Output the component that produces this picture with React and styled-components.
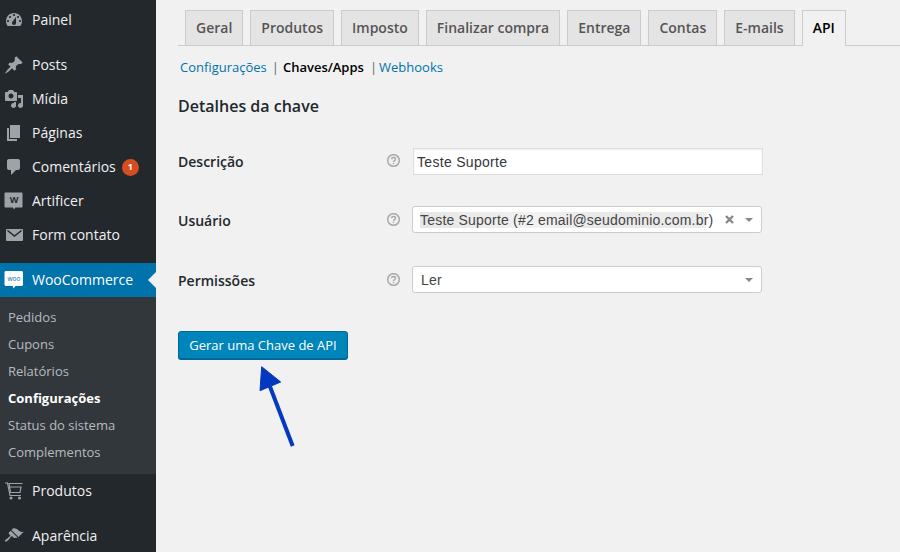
import React from 'react';
import styled, { createGlobalStyle } from 'styled-components';

const GlobalStyle = createGlobalStyle`
    html, body {
        margin: 0;
        padding: 0;
        background: #f1f1f1;
        overflow: hidden;
    }
    * {
        box-sizing: border-box;
    }
`;

const Page = styled.div`
    display: flex;
    width: 900px;
    height: 552px;
    overflow: hidden;
    background: #f1f1f1;
    font-family: "Open Sans", sans-serif;
    color: #23282d;
`;

const Sidebar = styled.nav`
    flex: 0 0 156px;
    height: 552px;
    overflow: hidden;
    padding-top: 3px;
    background: #23282d;
`;

const MenuItem = styled.div`
    position: relative;
    display: flex;
    align-items: center;
    gap: 8px;
    height: 34px;
    padding-left: 4px;
    margin-bottom: ${(p) => (p.$spaced ? '11px' : '0')};
    font-size: 14px;
    line-height: 18px;
    color: #f0f0f0;
    background: ${(p) => (p.$active ? '#0073aa' : 'transparent')};
    svg {
        flex: 0 0 20px;
        fill: ${(p) => (p.$active ? '#fff' : '#9ea3a8')};
    }
    ${(p) => p.$active && `
        color: #fff;
        &::after {
            content: "";
            position: absolute;
            right: 0;
            top: 9px;
            border: 8px solid transparent;
            border-right-color: #f1f1f1;
        }
    `}
`;

const Badge = styled.span`
    display: inline-flex;
    align-items: center;
    justify-content: center;
    width: 17px;
    height: 17px;
    margin-left: -2px;
    border-radius: 50%;
    background: #d54e21;
    color: #fff;
    font-size: 9px;
    font-weight: 700;
`;

const SubMenu = styled.div`
    padding: 7px 0 8px;
    background: #32373c;
`;

const SubItem = styled.div`
    height: 27px;
    padding-left: 8px;
    font-size: 13px;
    line-height: 27px;
    font-weight: ${(p) => (p.$current ? 700 : 400)};
    color: ${(p) => (p.$current ? '#fff' : 'rgba(240, 245, 250, 0.7)')};
`;

const Main = styled.main`
    position: relative;
    flex: 1;
    padding: 10px 0 0 22px;
`;

const Tabs = styled.div`
    display: flex;
    gap: 7px;
    height: 36px;
    padding-left: 7px;
    border-bottom: 1px solid #ccc;
`;

const Tab = styled.div`
    height: ${(p) => (p.$active ? '36px' : '35px')};
    padding: 0 10px;
    border: 1px solid #ccc;
    border-bottom: 0;
    background: ${(p) => (p.$active ? '#f1f1f1' : '#e4e4e4')};
    color: ${(p) => (p.$active ? '#000' : '#555')};
    font-size: 14px;
    font-weight: 600;
    line-height: 34px;
    white-space: nowrap;
`;

const SubNav = styled.div`
    display: flex;
    margin: 12px 0 0 2px;
    font-size: 13px;
    line-height: 18px;
    color: #666;
`;

const SubLink = styled.span`
    color: ${(p) => (p.$current ? '#000' : '#0073aa')};
    font-weight: ${(p) => (p.$current ? 600 : 400)};
`;

const Separator = styled.span`
    margin: 0 ${(p) => p.$right}px 0 ${(p) => p.$left}px;
`;

const Heading = styled.h2`
    margin: 19px 0 0;
    font-size: 16px;
    line-height: 22px;
    font-weight: 600;
    color: #23282d;
`;

const Form = styled.form`
    margin-top: 31px;
`;

const FormRow = styled.div`
    display: flex;
    align-items: flex-start;
    height: ${(p) => p.$height}px;
`;

const Label = styled.label`
    flex: 0 0 208px;
    padding-top: ${(p) => p.$top}px;
    font-size: 14px;
    line-height: 18px;
    font-weight: 600;
    color: #23282d;
`;

const Help = styled.svg`
    flex: 0 0 16px;
    margin-top: ${(p) => p.$top}px;
    fill: none;
    stroke: #aaa;
`;

const TextInput = styled.input`
    display: block;
    width: 350px;
    height: 27px;
    margin-left: 11px;
    padding: 0 3px;
    border: 1px solid #ddd;
    outline: none;
    background: #fff;
    box-shadow: inset 0 1px 2px rgba(0, 0, 0, 0.07);
    font-family: "Liberation Sans", Arial, sans-serif;
    font-size: 14px;
    letter-spacing: 0.3px;
    color: #32373c;
`;

const SelectBox = styled.div`
    display: flex;
    align-items: center;
    width: 350px;
    height: 27px;
    margin-left: 10px;
    padding: 0 8px;
    border: 1px solid #ccc;
    border-radius: 3px;
    background: #fff;
    font-family: "Liberation Sans", Arial, sans-serif;
    font-size: 14px;
    letter-spacing: 0.2px;
    color: #444;
    white-space: nowrap;
`;

const Redacted = styled.span`
    margin-left: -1px;
    background: linear-gradient(90deg, #e6e6e6 0%, #f2f2f2 40%, #e9e9e9 60%, #ececec 98%, #fff 100%);
`;

const Clear = styled.svg`
    margin-left: auto;
    stroke: #888;
    stroke-width: 2.4;
`;

const Caret = styled.span`
    margin-left: ${(p) => (p.$auto ? 'auto' : '11px')};
    border: 4px solid transparent;
    border-top-color: #888;
    border-bottom: 0;
`;

const PrimaryButton = styled.button`
    display: block;
    width: 170px;
    height: 28px;
    padding: 0;
    border: 1px solid #006799;
    border-radius: 3px;
    background: #0085ba;
    box-shadow: 0 1px 0 #006799;
    color: #fff;
    font-family: "Open Sans", sans-serif;
    font-size: 13px;
    line-height: 26px;
`;

const Arrow = styled.svg`
    position: absolute;
    left: 100px;
    top: 360px;
    fill: #0339c0;
    stroke: #0339c0;
`;

const Icon = ({ d }) => (
    <svg width="20" height="20" viewBox="0 0 20 20">
        <path d={d} fillRule="evenodd" />
    </svg>
);

const icons = {
    dashboard: 'M3.76 16h12.48c1.1-1.37 1.76-3.11 1.76-5 0-4.42-3.58-8-8-8s-8 3.58-8 8c0 1.89.66 3.63 1.76 5zM10 4c.55 0 1 .45 1 1s-.45 1-1 1-1-.45-1-1 .45-1 1-1zM6 6c.55 0 1 .45 1 1s-.45 1-1 1-1-.45-1-1 .45-1 1-1zm8 0c.55 0 1 .45 1 1s-.45 1-1 1-1-.45-1-1 .45-1 1-1zm-5.37 5.55L12 7v6c0 1.1-.9 2-2 2s-2-.9-2-2c0-.57.24-1.08.63-1.45zM4 10c.55 0 1 .45 1 1s-.45 1-1 1-1-.45-1-1 .45-1 1-1zm12 0c.55 0 1 .45 1 1s-.45 1-1 1-1-.45-1-1 .45-1 1-1z',
    pin: 'M10.44 3.02l1.82-1.82 6.36 6.35-1.83 1.82c-1.05-.68-2.48-.57-3.41.36l-.75.75c-.92.93-1.04 2.35-.35 3.41l-1.83 1.82-2.41-2.41-2.8 2.79c-.42.42-3.38 2.71-3.8 2.29s1.86-3.39 2.28-3.81l2.79-2.79L4.1 9.36l1.83-1.82c1.05.69 2.48.57 3.4-.36l.75-.75c.93-.92 1.05-2.35.36-3.41z',
    media: 'M13 11V4c0-.55-.45-1-1-1h-1.67L9 1H5L3.67 3H2c-.55 0-1 .45-1 1v7c0 .55.45 1 1 1h10c.55 0 1-.45 1-1zM7 4.5c1.38 0 2.5 1.12 2.5 2.5S8.38 9.5 7 9.5 4.5 8.38 4.5 7 5.62 4.5 7 4.5zM14 6h5v10.5c0 1.38-1.12 2.5-2.5 2.5S14 17.88 14 16.5s1.12-2.5 2.5-2.5c.17 0 .34.02.5.05V9h-3V6zm-4 8.05V13h2v3.5c0 1.38-1.12 2.5-2.5 2.5S7 17.88 7 16.5 8.12 14 9.5 14c.17 0 .34.02.5.05z',
    page: 'M6 15V2h10v13H6zm-1 1h8v2H3V5h2v11z',
    comments: 'M5 2h9c1.1 0 2 .9 2 2v7c0 1.1-.9 2-2 2h-2l-5 5v-5H5c-1.1 0-2-.9-2-2V4c0-1.1.9-2 2-2z',
    brush: 'M14.48 11.06L7.41 3.99l1.5-1.5c.5-.56 2.3-.47 3.51.32 1.21.8 1.43 1.28 2.91 2.1 1.18.64 2.45 1.26 4.45.85zm-.71.71L6.7 4.7 4.93 6.47c-.39.39-.39 1.02 0 1.41l1.06 1.06c.39.39.39 1.03 0 1.42-.6.6-1.43 1.11-2.21 1.69-.35.26-.7.53-1.01.84C1.43 13.23.4 14.75 1.1 15.45c.7.7 2.22-.33 3.54-1.66.31-.31.58-.66.84-1.01.58-.78 1.09-1.61 1.69-2.21.39-.39 1.02-.39 1.41 0l1.06 1.06c.39.39 1.02.39 1.41 0z',
};

const ArtificerIcon = () => (
    <svg width="20" height="20" viewBox="0 0 20 20">
        <path d="M2.500 1.500h15c.6 0 1 .4 1 1v13c0 .6-.4 1-1 1h-6l-1.500 2-1-2h-7.500c-.6 0-1-.4-1-1v-13c0-.6.4-1 1-1z" />
        <text x="10" y="12" textAnchor="middle" fontSize="9" fontWeight="700" fontFamily="Open Sans, sans-serif" fill="#23282d">W</text>
    </svg>
);

const WooIcon = () => (
    <svg width="20" height="20" viewBox="0 0 20 20">
        <path d="M2.500 1h15c.8 0 1.500.7 1.500 1.500v12c0 .8-.7 1.500-1.500 1.500h-6l-2 2.500-.8-2.500h-6.700c-.8 0-1.500-.7-1.500-1.500v-12c0-.8.7-1.500 1.500-1.500z" />
        <text x="10" y="10.500" textAnchor="middle" fontSize="6.500" fontFamily="Open Sans, sans-serif" fill="#0073aa">woo</text>
    </svg>
);

const MailIcon = () => (
    <svg width="20" height="20" viewBox="0 0 20 20">
        <rect x="2" y="4" width="17" height="12" rx="1" />
        <path d="M3.500 5.500L10.500 11l7-5.500" fill="none" stroke="#23282d" strokeWidth="1.500" />
    </svg>
);

const CartIcon = () => (
    <svg width="20" height="20" viewBox="0 0 20 20">
        <g fill="none" stroke="#9ea3a8" strokeWidth="1.200">
            <path d="M18.500 2.500h-13.500l1.500 9h9.500l1-5.500h-11" />
            <path d="M1 2h2.500l2.500 12.500h11" />
        </g>
        <circle cx="7" cy="17" r="1.500" />
        <circle cx="15.500" cy="17" r="1.500" />
    </svg>
);

const HelpIcon = ({ top }) => (
    <Help $top={top} width="16" height="16" viewBox="0 0 16 16">
        <circle cx="7.500" cy="6.500" r="5.800" strokeWidth="1.500" />
        <path d="M5.500 5.300c.1-1.200 1-1.800 2-1.800 1.100 0 2 .7 2 1.700 0 1.400-2 1.300-2 2.800" strokeWidth="1.400" />
        <path d="M7.500 8.800v1.300" strokeWidth="1.400" />
    </Help>
);

const tabs = [
    { name: 'Geral' },
    { name: 'Produtos' },
    { name: 'Imposto' },
    { name: 'Finalizar compra' },
    { name: 'Entrega' },
    { name: 'Contas' },
    { name: 'E-mails' },
    { name: 'API', active: true },
];

const subItems = ['Pedidos', 'Cupons', 'Relatórios', 'Configurações', 'Status do sistema', 'Complementos'];

export default function App() {
    return (
        <Page>
            <GlobalStyle />
            <Sidebar>
                <MenuItem $spaced><Icon d={icons.dashboard} />Painel</MenuItem>
                <MenuItem><Icon d={icons.pin} />Posts</MenuItem>
                <MenuItem><Icon d={icons.media} />Mídia</MenuItem>
                <MenuItem><Icon d={icons.page} />Páginas</MenuItem>
                <MenuItem><Icon d={icons.comments} />Comentários <Badge>1</Badge></MenuItem>
                <MenuItem><ArtificerIcon />Artificer</MenuItem>
                <MenuItem $spaced><MailIcon />Form contato</MenuItem>
                <MenuItem $active><WooIcon />WooCommerce</MenuItem>
                <SubMenu>
                    {subItems.map((item) => (
                        <SubItem key={item} $current={item === 'Configurações'}>{item}</SubItem>
                    ))}
                </SubMenu>
                <MenuItem $spaced><CartIcon />Produtos</MenuItem>
                <MenuItem><Icon d={icons.brush} />Aparência</MenuItem>
            </Sidebar>
            <Main>
                <Tabs>
                    {tabs.map((tab) => (
                        <Tab key={tab.name} $active={tab.active}>{tab.name}</Tab>
                    ))}
                </Tabs>
                <SubNav>
                    <SubLink>Configurações</SubLink>
                    <Separator $left={5} $right={4}>|</Separator>
                    <SubLink $current>Chaves/Apps</SubLink>
                    <Separator $left={6} $right={2}>|</Separator>
                    <SubLink>Webhooks</SubLink>
                </SubNav>
                <Heading>Detalhes da chave</Heading>
                <Form>
                    <FormRow $height={58}>
                        <Label $top={5}>Descrição</Label>
                        <HelpIcon top={6} />
                        <TextInput readOnly value="Teste Suporte" />
                    </FormRow>
                    <FormRow $height={60}>
                        <Label $top={6}>Usuário</Label>
                        <HelpIcon top={7} />
                        <SelectBox>
                            <Redacted>Teste Suporte (#2 email@seudominio.com.br</Redacted>)
                            <Clear width="9" height="9" viewBox="0 0 9 9">
                                <path d="M1 1l7 7M8 1l-7 7" />
                            </Clear>
                            <Caret />
                        </SelectBox>
                    </FormRow>
                    <FormRow $height={65}>
                        <Label $top={6}>Permissões</Label>
                        <HelpIcon top={7} />
                        <SelectBox>
                            Ler
                            <Caret $auto />
                        </SelectBox>
                    </FormRow>
                    <PrimaryButton type="button">Gerar uma Chave de API</PrimaryButton>
                </Form>
                <Arrow width="50" height="90" viewBox="0 0 50 90">
                    <path d="M5.700 6.700L24.700 22 4 30.700z" />
                    <path d="M13 24L36.700 86" strokeWidth="4" fill="none" />
                </Arrow>
            </Main>
        </Page>
    );
}
